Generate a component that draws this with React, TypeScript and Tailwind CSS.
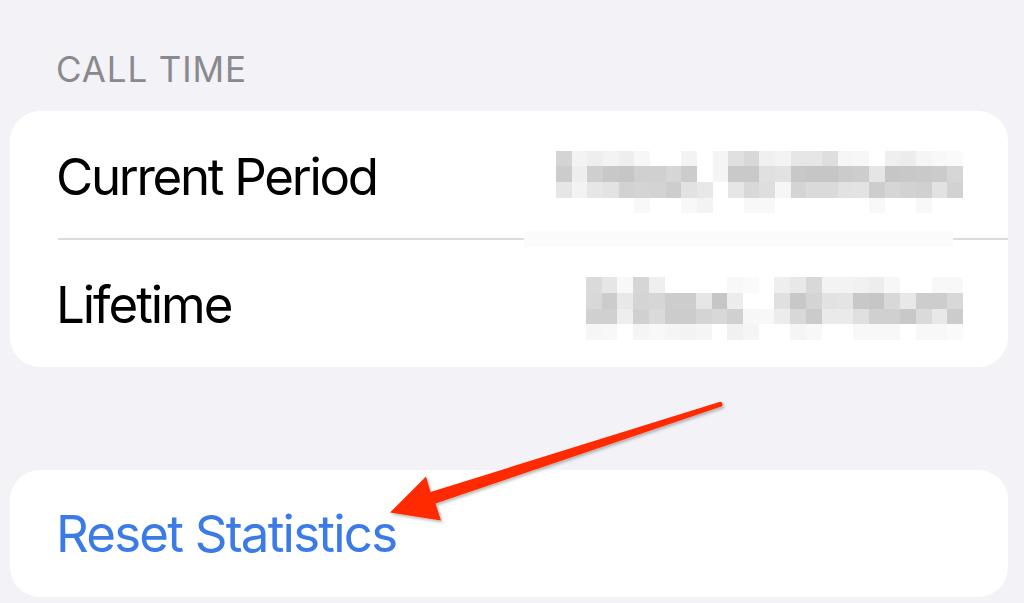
import React from 'react';

// Pixelated (redacted) values, one gray level per cell
const currentPeriodMosaic = [
  'd4 f3 ee f3 ee f7 ff ff f3 ff f5 e0 d8 f0 f3 e6 e6 de f6 f7 ff ef ec f5 f8 fa',
  'cc ee cf c8 c6 d0 d0 d6 cc ff f5 c9 c9 e0 e2 c8 c6 c6 cb cd e5 c6 c8 c9 cb d6',
  'e6 f3 e6 e3 d2 d4 d3 cd e2 e8 ff e6 d8 de f6 d4 da da e2 e3 cd d6 d2 d0 e2 d2',
  'ff ff ff ff ff f8 ff ff f8 f3 ff ff f8 f8 ff ff ff ff ff ff f8 ff ff f8 ff ff',
];

const lifetimeMosaic = [
  'da e6 f8 d6 ef ff ff ff ff f8 fa ff ee e8 d8 f3 f3 f1 ed f7 ff ff f8 f8',
  'd8 cc e8 d4 d6 cd cd e6 c6 ec ff ff e0 c8 d4 e2 e4 c8 c6 d8 e8 cd cd d8',
  'd0 d0 ee d0 da cc cc d4 d8 d0 f7 f8 ec d8 cb ea ea e0 d0 d0 c8 da e8 cc',
  'f6 f8 ff f5 f8 f5 f3 f5 ff f1 f5 ff ff f5 f8 ff ff f8 f8 f8 ff f8 f8 fa',
];

function Mosaic({ rows, className }: { rows: string[]; className: string }) {
  const cells = rows.flatMap((r) => r.split(' '));
  return (
    <div className={className}>
      {cells.map((v, i) => (
        <div key={i} className="h-[15.67px]" style={{ backgroundColor: `#${v}${v}${v}` }} />
      ))}
    </div>
  );
}

function Arrow() {
  return (
    <svg className="absolute left-0 top-0 pointer-events-none" width="1024" height="603" viewBox="0 0 1024 603">
      <defs>
        <filter id="arrowShadow" x="-10%" y="-10%" width="130%" height="140%">
          <feDropShadow dx="1.5" dy="2" stdDeviation="1.5" floodColor="#000" floodOpacity="0.28" />
        </filter>
      </defs>
      <path
        d="M720.2 401.8 Q723.5 402.5 722 406.2 L435.5 503.5 L441 520.5 L390 512.5 L426 476.5 L430.5 492 Z"
        fill="#ff2a00"
        filter="url(#arrowShadow)"
      />
    </svg>
  );
}

export default function App() {
  return (
    <div className="relative h-[603px] w-full overflow-hidden bg-[#f2f2f7] font-['Inter','Liberation_Sans',sans-serif]">
      <div className="pt-[52px] pl-[10px] pr-[16px]">
        {/* Section header */}
        <p className="pl-[46px] text-[35px] leading-none tracking-[0.025em] text-[#8a8a8e]">CALL TIME</p>

        {/* Call time card */}
        <div className="mt-[24px] rounded-[30px] bg-white">
          <div className="flex h-[120px] items-center justify-between pl-[46px] pr-[45px]">
            <span className="mt-[10px] text-[51px] leading-none tracking-[-0.045em] text-black">Current Period</span>
            <Mosaic rows={currentPeriodMosaic} className="mt-[22px] grid w-[407px] grid-cols-[repeat(26,1fr)]" />
          </div>

          <div className="flex h-[16px] items-center pl-[48px]">
            <div className="h-[1.5px] w-[466px] bg-[#dcdcdc]" />
            <div className="h-[16px] w-[429px] bg-[#fbfbfb]" />
            <div className="h-[1.5px] flex-1 bg-[#dcdcdc]" />
          </div>

          <div className="flex h-[120px] items-center justify-between pl-[46px] pr-[45px]">
            <span className="mt-[-6px] text-[51px] leading-none tracking-[-0.04em] text-black">Lifetime</span>
            <Mosaic rows={lifetimeMosaic} className="mt-[3px] grid w-[377px] grid-cols-[repeat(24,1fr)]" />
          </div>
        </div>

        {/* Reset card */}
        <div className="mt-[103px] flex h-[127px] items-center rounded-[30px] bg-white pl-[46px]">
          <span className="text-[51px] leading-none tracking-[-0.035em] text-[#3b7be8]">Reset Statistics</span>
        </div>
      </div>

      <Arrow />
    </div>
  );
}
